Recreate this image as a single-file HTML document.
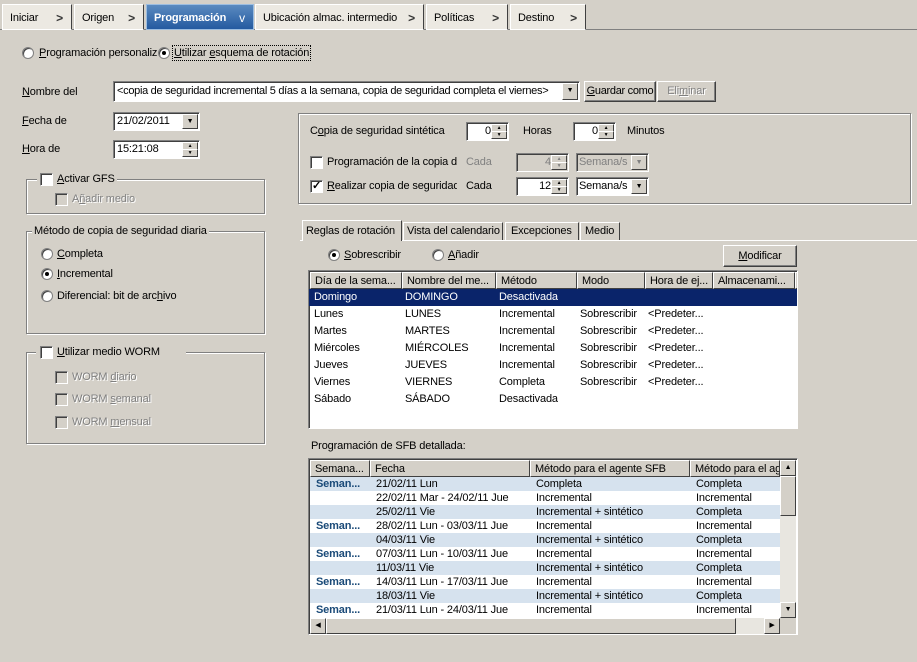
<!DOCTYPE html>
<html><head><meta charset="utf-8"><style>
*{box-sizing:border-box;margin:0;padding:0}
body{width:917px;height:662px;background:#d4d0c8;font-family:"Liberation Sans",sans-serif;font-size:11px;letter-spacing:-0.15px;color:#000;position:relative;overflow:hidden}
.a{position:absolute;white-space:nowrap}
.tab{position:absolute;top:4px;height:26px;background:#ece9e2;border:1px solid #fff;border-right:1px solid #404040;padding:7px 0 0 7px;font-size:11px;white-space:nowrap}
.tab .ar{position:absolute;right:8px;top:6px;font-weight:bold;font-size:12px;color:#333}
.sunk{position:absolute;background:#fff;border:1px solid;border-color:#808080 #fff #fff #808080;box-shadow:inset 1px 1px 0 #404040;white-space:nowrap;overflow:hidden}
.btn{position:absolute;background:#d4d0c8;border:1px solid;border-color:#fff #404040 #404040 #fff;box-shadow:inset -1px -1px 0 #808080;text-align:center;white-space:nowrap}
.grp{position:absolute;border:1px solid #808080;box-shadow:1px 1px 0 #fff,inset 1px 1px 0 #fff}
.rad{position:absolute;width:12px;height:12px;border-radius:50%;background:#fff;border:1px solid #808080;box-shadow:inset 1px 1px 0 #404040}
.rad.on::after{content:"";position:absolute;left:3px;top:3px;width:4px;height:4px;border-radius:50%;background:#000}
.chk{position:absolute;width:13px;height:13px;background:#fff;border:1px solid;border-color:#808080 #fff #fff #808080;box-shadow:inset 1px 1px 0 #404040}
.chk.dis{background:#d4d0c8}
.dis{color:#808080}
.dd{position:absolute;width:16px;background:#d4d0c8;border:1px solid;border-color:#fff #404040 #404040 #fff;font-size:7px;text-align:center;line-height:14px}
.hd{position:absolute;height:17px;background:#d4d0c8;border:1px solid;border-color:#fff #404040 #404040 #fff;padding:2px 4px;overflow:hidden;white-space:nowrap}
.row{position:absolute;left:0;height:17px;width:100%}
.row span{position:absolute;top:2px}
.r2{position:absolute;left:0;height:14px;width:470px}
.r2 span{position:absolute;top:1px}
.bl{background:#d6e2ee}
</style></head><body>
<div class="a" style="left:0;top:29px;width:917px;height:1px;background:#808080"></div>
<div class="tab" style="left:2px;width:70px">Iniciar<span class="ar">&gt;</span></div>
<div class="tab" style="left:74px;width:70px">Origen<span class="ar">&gt;</span></div>
<div class="tab" style="left:146px;width:108px;background:linear-gradient(#5a8ac0,#245aa0);color:#fff;font-weight:bold;border-color:#9cbde0">Programación<span class="ar" style="color:#fff;font-weight:normal">v</span></div>
<div class="tab" style="left:255px;width:169px">Ubicación almac. intermedio<span class="ar">&gt;</span></div>
<div class="tab" style="left:426px;width:82px">Políticas<span class="ar">&gt;</span></div>
<div class="tab" style="left:510px;width:76px">Destino<span class="ar">&gt;</span></div>

<div class="rad" style="left:22px;top:47px"></div><div class="a" style="left:39px;top:47px"><u>P</u>rogramación personaliz</div>
<div class="rad on" style="left:158px;top:47px"></div><div class="a" style="left:172px;top:45px;border:1px dotted #000;padding:1px 1px"><u>U</u>tilizar <u>e</u>squema de rotación</div>

<div class="a" style="left:22px;top:86px"><u>N</u>ombre del</div>
<div class="sunk" style="left:113px;top:81px;width:467px;height:21px;padding:3px 0 0 3px;letter-spacing:-0.3px">&lt;copia de seguridad incremental 5 días a la semana, copia de seguridad completa el viernes&gt;<div class="dd" style="right:1px;top:1px;height:17px">▼</div></div>
<div class="btn" style="left:584px;top:81px;width:72px;height:21px;padding-top:3px;letter-spacing:-0.3px"><u>G</u>uardar como</div>
<div class="btn dis" style="left:657px;top:81px;width:59px;height:21px;padding-top:3px;color:#808080;text-shadow:1px 1px 0 #fff">Eli<u>m</u>inar</div>

<div class="a" style="left:22px;top:115px"><u>F</u>echa de</div>
<div class="sunk" style="left:113px;top:112px;width:87px;height:19px;padding:2px 0 0 3px">21/02/2011<div class="dd" style="right:1px;top:1px;height:15px">▼</div></div>
<div class="a" style="left:22px;top:143px"><u>H</u>ora de</div>
<div class="sunk" style="left:113px;top:140px;width:87px;height:19px;padding:2px 0 0 3px">15:21:08<div class="dd" style="right:1px;top:1px;height:8px;line-height:6px;font-size:5px">▲</div><div class="dd" style="right:1px;top:8px;height:8px;line-height:6px;font-size:5px">▼</div></div>

<div class="grp" style="left:26px;top:179px;width:239px;height:35px"></div>
<div class="a" style="left:37px;top:172px;background:#d4d0c8;width:80px;height:14px"></div>
<div class="chk" style="left:40px;top:173px"></div><div class="a" style="left:57px;top:173px"><u>A</u>ctivar GFS</div>
<div class="chk dis" style="left:55px;top:193px"></div><div class="a dis" style="left:72px;top:193px;text-shadow:1px 1px 0 #fff">A<u>ñ</u>adir medio</div>

<div class="grp" style="left:26px;top:231px;width:239px;height:103px"></div>
<div class="a" style="left:32px;top:225px;background:#d4d0c8;padding:0 2px">Método de copia de seguridad diaria</div>
<div class="rad" style="left:41px;top:248px"></div><div class="a" style="left:57px;top:248px"><u>C</u>ompleta</div>
<div class="rad on" style="left:41px;top:268px"></div><div class="a" style="left:57px;top:268px"><u>I</u>ncremental</div>
<div class="rad" style="left:41px;top:290px"></div><div class="a" style="left:57px;top:290px">Diferencial: bit de arc<u>h</u>ivo</div>

<div class="grp" style="left:26px;top:352px;width:239px;height:92px"></div>
<div class="a" style="left:36px;top:345px;background:#d4d0c8;width:150px;height:14px"></div>
<div class="chk" style="left:40px;top:346px"></div><div class="a" style="left:57px;top:346px"><u>U</u>tilizar medio WORM</div>
<div class="chk dis" style="left:55px;top:371px"></div><div class="a dis" style="left:72px;top:371px;text-shadow:1px 1px 0 #fff">WORM <u>d</u>iario</div>
<div class="chk dis" style="left:55px;top:393px"></div><div class="a dis" style="left:72px;top:393px;text-shadow:1px 1px 0 #fff">WORM <u>s</u>emanal</div>
<div class="chk dis" style="left:55px;top:416px"></div><div class="a dis" style="left:72px;top:416px;text-shadow:1px 1px 0 #fff">WORM <u>m</u>ensual</div>

<div class="grp" style="left:298px;top:113px;width:613px;height:91px"></div>
<div class="a" style="left:310px;top:125px">C<u>o</u>pia de seguridad sintética</div>
<div class="sunk" style="left:466px;top:122px;width:43px;height:19px;text-align:right;padding:2px 17px 0 0">0<div class="dd" style="right:1px;top:1px;height:8px;line-height:6px;font-size:5px">▲</div><div class="dd" style="right:1px;top:8px;height:8px;line-height:6px;font-size:5px">▼</div></div>
<div class="a" style="left:523px;top:125px">Horas</div>
<div class="sunk" style="left:573px;top:122px;width:43px;height:19px;text-align:right;padding:2px 17px 0 0">0<div class="dd" style="right:1px;top:1px;height:8px;line-height:6px;font-size:5px">▲</div><div class="dd" style="right:1px;top:8px;height:8px;line-height:6px;font-size:5px">▼</div></div>
<div class="a" style="left:627px;top:125px">Minutos</div>

<div class="chk" style="left:310px;top:156px"></div><div class="a" style="left:327px;top:156px;width:140px;overflow:hidden">Programación de la copia d</div><div class="a dis" style="left:466px;top:156px">Cada</div>
<div class="sunk" style="left:516px;top:153px;width:53px;height:19px;text-align:right;padding:2px 17px 0 0;background:#d4d0c8;color:#808080">4<div class="dd" style="right:1px;top:1px;height:8px;line-height:6px;font-size:5px">▲</div><div class="dd" style="right:1px;top:8px;height:8px;line-height:6px;font-size:5px">▼</div></div>
<div class="sunk" style="left:576px;top:153px;width:73px;height:19px;padding:2px 0 0 2px;background:#d4d0c8;color:#808080">Semana/s<div class="dd" style="right:1px;top:1px;height:15px;color:#808080">▼</div></div>

<div class="chk" style="left:310px;top:180px;font-size:11px;line-height:10px;text-align:center;font-weight:bold">✓</div><div class="a" style="left:327px;top:180px;width:130px;overflow:hidden"><u>R</u>ealizar copia de seguridad</div><div class="a" style="left:466px;top:180px">Cada</div>
<div class="sunk" style="left:516px;top:177px;width:53px;height:19px;text-align:right;padding:2px 17px 0 0">12<div class="dd" style="right:1px;top:1px;height:8px;line-height:6px;font-size:5px">▲</div><div class="dd" style="right:1px;top:8px;height:8px;line-height:6px;font-size:5px">▼</div></div>
<div class="sunk" style="left:576px;top:177px;width:73px;height:19px;padding:2px 0 0 2px">Semana/s<div class="dd" style="right:1px;top:1px;height:15px">▼</div></div>

<div class="a" style="left:300px;top:240px;width:617px;height:1px;background:#fff"></div>
<div class="a" style="left:302px;top:220px;width:100px;height:21px;background:#d4d0c8;border:1px solid #fff;border-bottom:none;border-right-color:#404040;padding:4px 0 0 3px;overflow:hidden">Reglas de rotación</div>
<div class="a" style="left:403px;top:222px;width:100px;height:18px;border:1px solid #fff;border-bottom:none;border-right-color:#404040;padding:2px 0 0 3px;overflow:hidden">Vista del calendario</div>
<div class="a" style="left:505px;top:222px;width:74px;height:18px;border:1px solid #fff;border-bottom:none;border-right-color:#404040;padding:2px 0 0 5px">Excepciones</div>
<div class="a" style="left:580px;top:222px;width:40px;height:18px;border:1px solid #fff;border-bottom:none;border-right-color:#404040;padding:2px 0 0 4px">Medio</div>

<div class="rad on" style="left:328px;top:249px"></div><div class="a" style="left:344px;top:249px"><u>S</u>obrescribir</div>
<div class="rad" style="left:432px;top:249px"></div><div class="a" style="left:448px;top:249px"><u>A</u>ñadir</div>
<div class="btn" style="left:723px;top:245px;width:74px;height:22px;padding-top:4px"><u>M</u>odificar</div>

<div class="sunk" style="left:308px;top:270px;width:490px;height:159px">
<div class="hd" style="left:1px;top:1px;width:92px">Día de la sema...</div>
<div class="hd" style="left:93px;top:1px;width:94px">Nombre del me...</div>
<div class="hd" style="left:187px;top:1px;width:81px">Método</div>
<div class="hd" style="left:268px;top:1px;width:68px">Modo</div>
<div class="hd" style="left:336px;top:1px;width:68px">Hora de ej...</div>
<div class="hd" style="left:404px;top:1px;width:82px">Almacenami...</div>
<div class="hd" style="left:486px;top:1px;width:10px"></div>
<div class="row" style="top:18px;background:#0a246a;color:#fff"><span style="left:5px">Domingo</span><span style="left:96px">DOMINGO</span><span style="left:190px">Desactivada</span></div>
<div class="row" style="top:35px"><span style="left:5px">Lunes</span><span style="left:96px">LUNES</span><span style="left:190px">Incremental</span><span style="left:271px">Sobrescribir</span><span style="left:339px">&lt;Predeter...</span></div>
<div class="row" style="top:52px"><span style="left:5px">Martes</span><span style="left:96px">MARTES</span><span style="left:190px">Incremental</span><span style="left:271px">Sobrescribir</span><span style="left:339px">&lt;Predeter...</span></div>
<div class="row" style="top:69px"><span style="left:5px">Miércoles</span><span style="left:96px">MIÉRCOLES</span><span style="left:190px">Incremental</span><span style="left:271px">Sobrescribir</span><span style="left:339px">&lt;Predeter...</span></div>
<div class="row" style="top:86px"><span style="left:5px">Jueves</span><span style="left:96px">JUEVES</span><span style="left:190px">Incremental</span><span style="left:271px">Sobrescribir</span><span style="left:339px">&lt;Predeter...</span></div>
<div class="row" style="top:103px"><span style="left:5px">Viernes</span><span style="left:96px">VIERNES</span><span style="left:190px">Completa</span><span style="left:271px">Sobrescribir</span><span style="left:339px">&lt;Predeter...</span></div>
<div class="row" style="top:120px"><span style="left:5px">Sábado</span><span style="left:96px">SÁBADO</span><span style="left:190px">Desactivada</span></div>
</div>

<div class="a" style="left:311px;top:440px">Programación de SFB detallada:</div>
<div class="sunk" style="left:308px;top:458px;width:490px;height:177px">
<div class="hd" style="left:1px;top:1px;width:60px">Semana...</div>
<div class="hd" style="left:61px;top:1px;width:160px">Fecha</div>
<div class="hd" style="left:221px;top:1px;width:160px">Método para el agente SFB</div>
<div class="hd" style="left:381px;top:1px;width:90px">Método para el ag</div>
<div style="position:absolute;left:1px;top:18px">
<div class="r2 bl" style="top:0"><span style="left:6px;color:#1a4a78;font-weight:bold">Seman...</span><span style="left:66px">21/02/11 Lun</span><span style="left:226px">Completa</span><span style="left:386px">Completa</span></div>
<div class="r2" style="top:14px;background:#fff"><span style="left:66px">22/02/11 Mar - 24/02/11 Jue</span><span style="left:226px">Incremental</span><span style="left:386px">Incremental</span></div>
<div class="r2 bl" style="top:28px"><span style="left:66px">25/02/11 Vie</span><span style="left:226px">Incremental + sintético</span><span style="left:386px">Completa</span></div>
<div class="r2" style="top:42px;background:#fff"><span style="left:6px;color:#1a4a78;font-weight:bold">Seman...</span><span style="left:66px">28/02/11 Lun - 03/03/11 Jue</span><span style="left:226px">Incremental</span><span style="left:386px">Incremental</span></div>
<div class="r2 bl" style="top:56px"><span style="left:66px">04/03/11 Vie</span><span style="left:226px">Incremental + sintético</span><span style="left:386px">Completa</span></div>
<div class="r2" style="top:70px;background:#fff"><span style="left:6px;color:#1a4a78;font-weight:bold">Seman...</span><span style="left:66px">07/03/11 Lun - 10/03/11 Jue</span><span style="left:226px">Incremental</span><span style="left:386px">Incremental</span></div>
<div class="r2 bl" style="top:84px"><span style="left:66px">11/03/11 Vie</span><span style="left:226px">Incremental + sintético</span><span style="left:386px">Completa</span></div>
<div class="r2" style="top:98px;background:#fff"><span style="left:6px;color:#1a4a78;font-weight:bold">Seman...</span><span style="left:66px">14/03/11 Lun - 17/03/11 Jue</span><span style="left:226px">Incremental</span><span style="left:386px">Incremental</span></div>
<div class="r2 bl" style="top:112px"><span style="left:66px">18/03/11 Vie</span><span style="left:226px">Incremental + sintético</span><span style="left:386px">Completa</span></div>
<div class="r2" style="top:126px;background:#fff"><span style="left:6px;color:#1a4a78;font-weight:bold">Seman...</span><span style="left:66px">21/03/11 Lun - 24/03/11 Jue</span><span style="left:226px">Incremental</span><span style="left:386px">Incremental</span></div>
</div>
<div style="position:absolute;left:471px;top:1px;width:16px;height:158px;background:#e8e6e0"></div>
<div class="dd" style="left:471px;top:1px;height:16px;font-size:7px">▲</div>
<div class="dd" style="left:471px;top:17px;height:40px"></div>
<div class="dd" style="left:471px;top:143px;height:16px;font-size:7px">▼</div>
<div style="position:absolute;left:1px;top:159px;width:470px;height:16px;background:#e8e6e0"></div>
<div class="dd" style="left:1px;top:159px;height:16px;font-size:7px">◀</div>
<div class="dd" style="left:17px;top:159px;width:410px;height:16px"></div>
<div class="dd" style="left:455px;top:159px;height:16px;font-size:7px">▶</div>
<div style="position:absolute;left:471px;top:159px;width:16px;height:16px;background:#d4d0c8"></div>
</div>
</body></html>
